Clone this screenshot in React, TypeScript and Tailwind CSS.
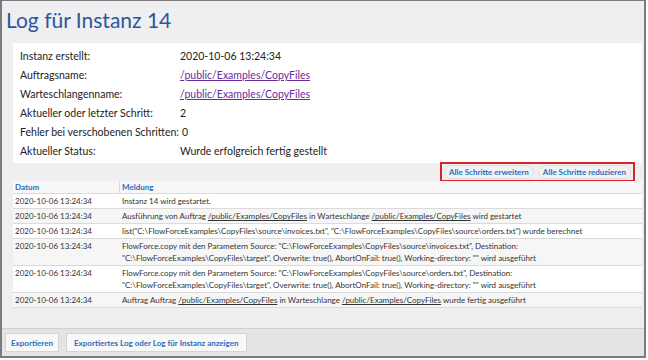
import React from 'react';

const font = { fontFamily: 'Lato, "Open Sans", sans-serif' };

const info: { label: string; value: string; link?: boolean }[] = [
  { label: 'Instanz erstellt:', value: '2020-10-06 13:24:34' },
  { label: 'Auftragsname:', value: '/public/Examples/CopyFiles', link: true },
  { label: 'Warteschlangenname:', value: '/public/Examples/CopyFiles', link: true },
  { label: 'Aktueller oder letzter Schritt:', value: '2' },
  { label: 'Fehler bei verschobenen Schritten:', value: '0' },
  { label: 'Aktueller Status:', value: 'Wurde erfolgreich fertig gestellt' },
];

const Link: React.FC<{ children: React.ReactNode }> = ({ children }) => (
  <span className="underline">{children}</span>
);

const rows: { date: string; msg: React.ReactNode }[] = [
  { date: '2020-10-06 13:24:34', msg: 'Instanz 14 wird gestartet.' },
  {
    date: '2020-10-06 13:24:34',
    msg: (
      <>
        Ausführung von Auftrag <Link>/public/Examples/CopyFiles</Link> in Warteschlange{' '}
        <Link>/public/Examples/CopyFiles</Link> wird gestartet
      </>
    ),
  },
  {
    date: '2020-10-06 13:24:34',
    msg: 'list("C:\\FlowForceExamples\\CopyFiles\\source\\invoices.txt", "C:\\FlowForceExamples\\CopyFiles\\source\\orders.txt") wurde berechnet',
  },
  {
    date: '2020-10-06 13:24:34',
    msg: (
      <>
        FlowForce.copy mit den Parametern Source: "C:\FlowForceExamples\CopyFiles\source\invoices.txt", Destination:
        <br />
        "C:\FlowForceExamples\CopyFiles\target", Overwrite: true(), AbortOnFail: true(), Working-directory: "" wird ausgeführt
      </>
    ),
  },
  {
    date: '2020-10-06 13:24:34',
    msg: (
      <>
        FlowForce.copy mit den Parametern Source: "C:\FlowForceExamples\CopyFiles\source\orders.txt", Destination:
        <br />
        "C:\FlowForceExamples\CopyFiles\target", Overwrite: true(), AbortOnFail: true(), Working-directory: "" wird ausgeführt
      </>
    ),
  },
  {
    date: '2020-10-06 13:24:34',
    msg: (
      <>
        Auftrag Auftrag <Link>/public/Examples/CopyFiles</Link> in Warteschlange{' '}
        <Link>/public/Examples/CopyFiles</Link> wurde fertig ausgeführt
      </>
    ),
  },
];

export default function App() {
  return (
    <div className="w-[648px] h-[360px] bg-white" style={font}>
      <div className="w-[646px] h-[358px] border-2 border-t border-[#7b7b7b] bg-[#efeff2] flex flex-col">
        <h1 className="h-[42px] pl-[4px] pt-[4px] text-[21px] leading-[30px] text-[#2b5797]">Log für Instanz 14</h1>

        <div className="flex-1 pl-[11px] pr-[2px] flex flex-col">
          <div className="bg-white h-[120px] pl-[7px] pt-[4px]">
            {info.map((r) => (
              <div key={r.label} className="flex h-[19px] items-center text-[10.5px] text-[#222] whitespace-nowrap">
                <div className="min-w-[160px] pr-[3px] shrink-0">{r.label}</div>
                <div className={r.link ? 'text-[#6a2c9e] underline' : ''}>{r.value}</div>
              </div>
            ))}
          </div>

          <div className="h-[18px] flex items-center justify-end pr-[7px]">
            <div className="flex gap-[4px] border-2 border-[#d9232a] px-[2px] py-[1px]">
              <button className="h-[14px] px-[4px] rounded-full bg-[#f2f2f4] border border-[#dedede] text-[8px] font-bold text-[#2a6ebb] leading-none">
                Alle Schritte erweitern
              </button>
              <button className="h-[14px] px-[4px] rounded-full bg-[#f2f2f4] border border-[#dedede] text-[8px] font-bold text-[#2a6ebb] leading-none">
                Alle Schritte reduzieren
              </button>
            </div>
          </div>

          <div className="text-[8px] text-[#333] leading-[12px]">
            <div className="flex h-[13px] bg-[#f7f7f8] border-b border-[#dadada] font-bold text-[#2a6ebb]">
              <div className="w-[107px] pl-[2px] border-r border-[#dadada]">Datum</div>
              <div className="pl-[2px]">Meldung</div>
            </div>
            {rows.map((r, i) => (
              <div
                key={i}
                className={`flex py-[1px] border-b border-[#dadada] ${i % 2 === 1 ? 'bg-[#f6f6f6]' : 'bg-white'}`}
              >
                <div className="w-[107px] pl-[2px] shrink-0">{r.date}</div>
                <div className="pl-[2px]">{r.msg}</div>
              </div>
            ))}
          </div>
        </div>

        <div className="h-[28px] bg-[#e4e4e6] border-t border-[#d0d0d0] flex items-center gap-[7px] pl-[3px]">
          <button className="h-[19px] px-[5px] bg-[#f8f8f8] border border-[#d4d4d4] text-[8px] font-bold text-[#2a6ebb]">
            Exportieren
          </button>
          <button className="h-[19px] px-[7px] bg-[#f8f8f8] border border-[#d4d4d4] text-[8px] font-bold text-[#2a6ebb]">
            Exportiertes Log oder Log für Instanz anzeigen
          </button>
        </div>
      </div>
    </div>
  );
}
